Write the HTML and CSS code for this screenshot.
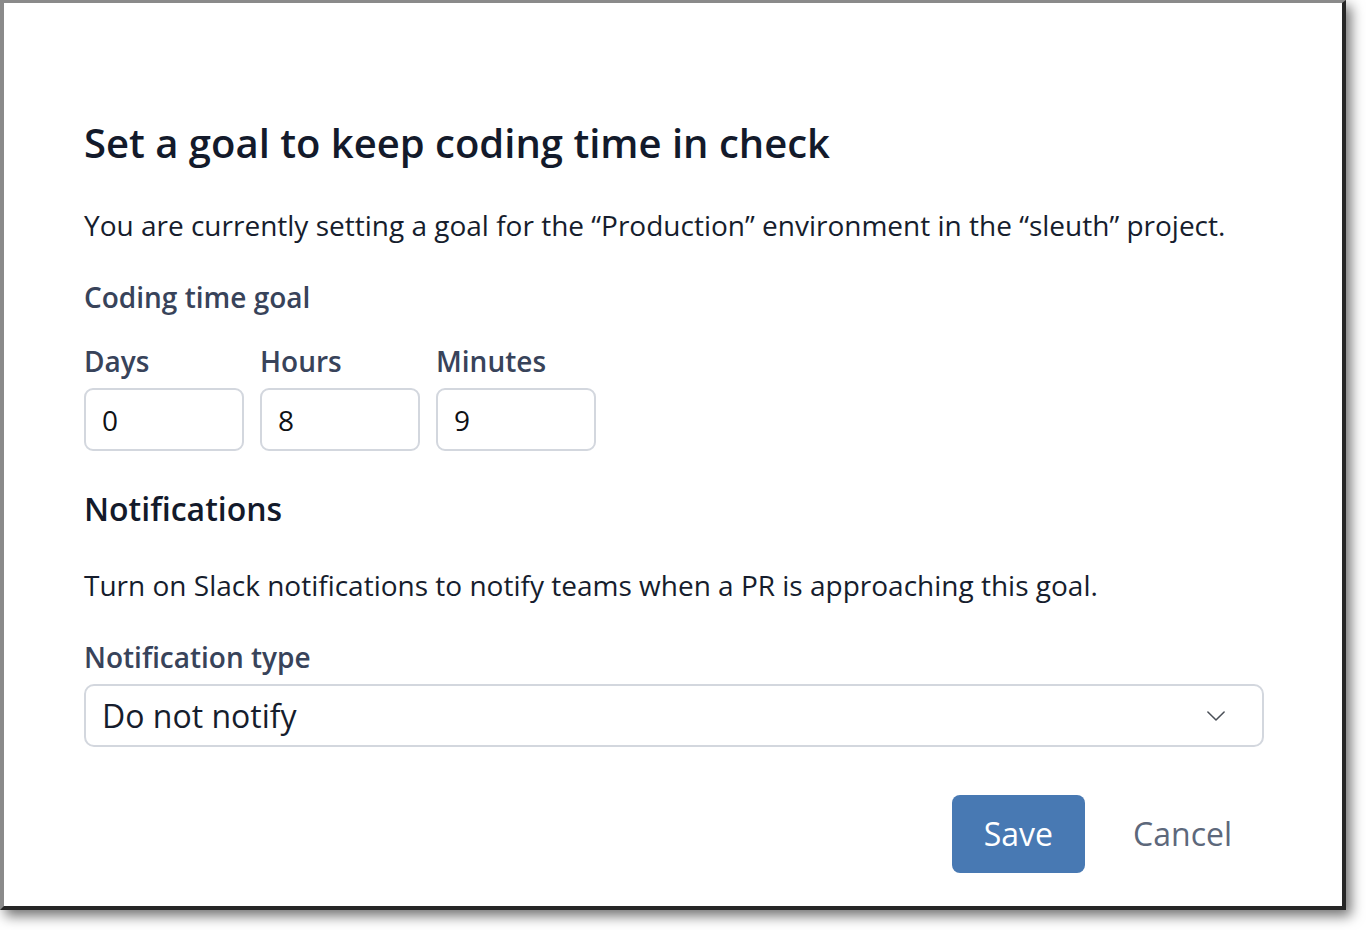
FILE: index.html
```html
<!DOCTYPE html>
<html lang="en">
<head>
<meta charset="utf-8">
<title>Set a goal</title>
<link rel="stylesheet" href="styles.css">
</head>
<body>
<div class="frame">
  <div class="modal">
    <h1 class="title">Set a goal to keep coding time in check</h1>
    <p class="text intro">You are currently setting a goal for the “Production” environment in the “sleuth” project.</p>
    <div class="label group-label">Coding time goal</div>
    <div class="time-row">
      <div class="field">
        <div class="label">Days</div>
        <div class="input">0</div>
      </div>
      <div class="field">
        <div class="label">Hours</div>
        <div class="input">8</div>
      </div>
      <div class="field">
        <div class="label">Minutes</div>
        <div class="input">9</div>
      </div>
    </div>
    <h2 class="section-title">Notifications</h2>
    <p class="text notif-text">Turn on Slack notifications to notify teams when a PR is approaching this goal.</p>
    <div class="label type-label">Notification type</div>
    <div class="select">
      <span class="select-value">Do not notify</span>
      <svg class="chevron" width="18" height="10" viewBox="0 0 20 11" fill="none"><path d="M1 1l9 9 9-9" stroke="#4a4f57" stroke-width="1.7" stroke-linecap="round" stroke-linejoin="round"/></svg>
    </div>
    <div class="actions">
      <button class="btn btn-save">Save</button>
      <button class="btn btn-cancel">Cancel</button>
    </div>
  </div>
</div>
</body>
</html>
```
FILE: styles.css
```css
* { box-sizing: border-box; }
html, body { margin: 0; padding: 0; background: #ffffff; }
body {
  font-family: "Open Sans", "Liberation Sans", sans-serif;
  width: 1366px;
  height: 930px;
  overflow: hidden;
}
.frame {
  width: 1346px;
  height: 910px;
  background: #ffffff;
  border-top: 3px solid #8a8a8a;
  border-left: 4px solid #8a8a8a;
  border-right: 4px solid #262626;
  border-bottom: 4px solid #262626;
  box-shadow: 5px 6px 12px rgba(0, 0, 0, 0.55);
}
.modal {
  padding: 116px 78px 0 81px;
  display: flex;
  flex-direction: column;
}
.title {
  margin: 0;
  font-size: 40px;
  line-height: 48px;
  font-weight: 600;
  color: #131a2b;
  margin-left: -1px;
}
.text {
  margin: 0;
  font-size: 28px;
  line-height: 36px;
  font-weight: 400;
  color: #161d2d;
  margin-left: -1px;
}
.intro { margin-top: 40px; }
.label {
  font-size: 28px;
  line-height: 36px;
  font-weight: 600;
  color: #38435a;
  margin-left: -1px;
}
.group-label { margin-top: 36px; }
.time-row {
  margin-top: 28px;
  display: flex;
  gap: 16px;
  margin-left: -1px;
}
.field {
  display: flex;
  flex-direction: column;
  gap: 9px;
}
.field .label { margin-left: 0; }
.input {
  width: 160px;
  height: 63px;
  border: 2px solid #d3d7de;
  border-radius: 9px;
  padding: 0 16px;
  display: flex;
  align-items: center;
  font-size: 28px;
  color: #0f1115;
}
.section-title {
  margin: 38px 0 0 -1px;
  font-size: 32px;
  line-height: 40px;
  font-weight: 600;
  color: #131a2b;
}
.notif-text { margin-top: 38px; }
.type-label { margin-top: 36px; }
.select {
  margin-top: 9px;
  margin-left: -1px;
  height: 63px;
  border: 2px solid #d3d7de;
  border-radius: 10px;
  padding: 0 37px 0 16px;
  display: flex;
  align-items: center;
  justify-content: space-between;
}
.select-value {
  font-size: 32px;
  color: #161d2d;
}
.actions {
  margin-top: 48px;
  display: flex;
  justify-content: flex-end;
  gap: 16px;
}
.btn {
  font-family: "Open Sans", "Liberation Sans", sans-serif;
  font-size: 32px;
  line-height: 40px;
  height: 78px;
  padding: 0 32px;
  border: none;
  border-radius: 8px;
  cursor: pointer;
}
.btn-save {
  background: #4879b3;
  color: #ffffff;
}
.btn-cancel {
  background: transparent;
  color: #5d687b;
  padding: 0 32px;
}
```
